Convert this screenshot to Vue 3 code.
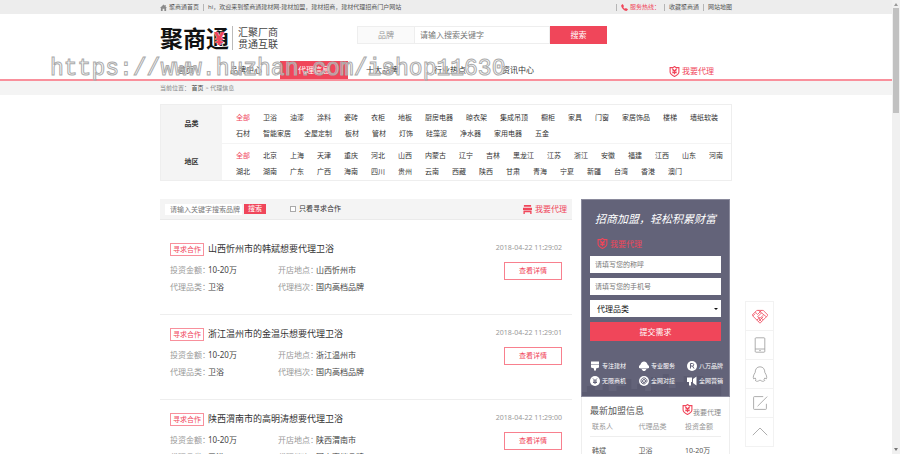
<template>
  <div class="page">
    <div class="content">
      <div class="topbar">
        <div class="wrap topbar-inner">
          <a href="#" class="home-link">
            <svg class="home-icon" viewBox="0 0 16 16"><path fill="#8a8a8a" d="M8 1 0 9h2v7h4v-5h4v5h4V9h2L13 6V2h-2v2z" /></svg>
            聚商通首页
          </a>
          <i class="sep"></i>
          <span>hi，欢迎来到聚商通建材网-建材加盟，建材招商，建材代理招商门户网站</span>
          <div class="topbar-right">
            <i class="sep"></i>
            <span class="hotline">
              <svg class="phone-icon" viewBox="0 0 16 16"><path fill="#f0465a" d="M1 2 4 0l3 5-2 2c1 2 2 3 4 4l2-2 5 3-2 3c-2 2-6 0-9-3S-1 5 1 2z" /></svg>
              服务热线：
            </span>
            <i class="sep"></i>
            <a href="#">收藏聚商通</a>
            <i class="sep"></i>
            <a href="#">网站地图</a>
          </div>
        </div>
      </div>

      <header class="header">
        <div class="wrap brand-row">
          <a href="#" class="logo">聚商<span class="logo-tong">通<b>¥</b></span></a>
          <div class="slogan">汇聚厂商<br />贯通互联</div>
          <form class="search" @submit.prevent>
            <span class="search-type">品牌</span>
            <input v-model="keyword" type="text" aria-label="搜索关键字" placeholder="请输入搜索关键字" />
            <button type="submit">搜索</button>
          </form>
        </div>
        <div class="wrap nav-row">
          <nav class="nav">
            <a v-for="item in navItems" :key="item" href="#" :class="{ active: item === '代理信息' }">{{ item }}</a>
          </nav>
          <a href="#" class="agent-link nav-agent">
            <svg class="shield" viewBox="0 0 20 20"><path d="M10 1 13 3h5v8c0 4-4 6-8 8-4-2-8-4-8-8V3h5z M6 5l4 4 4-4 M10 9v6 M6 9h8 M6 12h8" /></svg>
            我要代理
          </a>
        </div>
      </header>

      <div class="crumbs">
        <div class="wrap">当前位置： <a href="#">首页</a> &gt; 代理信息</div>
      </div>

      <div class="wrap filter">
        <div v-for="group in filters" :key="group.name" class="filter-row">
          <div class="filter-name">{{ group.name }}</div>
          <div class="filter-body">
            <div v-for="(line, n) in group.lines" :key="n" class="filter-line">
              <a v-for="opt in line" :key="opt" href="#" :class="{ on: opt === '全部' }">{{ opt }}</a>
            </div>
          </div>
        </div>
      </div>

      <div class="wrap main">
        <section class="list">
          <div class="toolbar">
            <input v-model="brand" type="text" class="brand-input" aria-label="搜索品牌" placeholder="请输入关键字搜索品牌" />
            <button class="brand-btn">搜索</button>
            <label class="only"><input v-model="onlyCoop" type="checkbox" />只看寻求合作</label>
            <a href="#" class="agent-link toolbar-agent">
              <svg class="shop" viewBox="0 0 22 20"><path fill="#f0465a" d="M3 0h16v4H3zM1 6h20v5H1zM2 12h18v8h-3v-4H5v4H2z" /></svg>
              我要代理
            </a>
          </div>
          <article v-for="item in items" :key="item.time" class="item">
            <div class="item-info">
              <h3><span class="tag">寻求合作</span>{{ item.title }}</h3>
              <dl>
                <div><dt>投资金额：</dt><dd>10-20万</dd></div>
                <div><dt>开店地点：</dt><dd>{{ item.place }}</dd></div>
                <div><dt>代理品类：</dt><dd>卫浴</dd></div>
                <div><dt>代理档次：</dt><dd>国内高档品牌</dd></div>
              </dl>
            </div>
            <div class="item-side">
              <time>{{ item.time }}</time>
              <button>查看详情</button>
            </div>
          </article>
        </section>

        <aside class="side">
          <form class="join" @submit.prevent>
            <h2>招商加盟，轻松积累财富</h2>
            <a href="#" class="agent-link join-agent">
              <svg class="shield" viewBox="0 0 20 20"><path d="M10 1 13 3h5v8c0 4-4 6-8 8-4-2-8-4-8-8V3h5z M6 5l4 4 4-4 M10 9v6 M6 9h8 M6 12h8" /></svg>
              我要代理
            </a>
            <input v-model="name" type="text" aria-label="称呼" placeholder="请填写您的称呼" />
            <input v-model="phone" type="text" aria-label="手机号" placeholder="请填写您的手机号" />
            <div class="select-box">
              <select v-model="category" aria-label="代理品类">
                <option>代理品类</option>
              </select>
            </div>
            <button type="submit">提交需求</button>
            <ul>
              <li v-for="f in features" :key="f.text">
                <svg viewBox="0 0 20 20">
                  <path v-if="f.icon === 'brush'" fill="#fff" d="M2 1h16v5H2zM2 7h16v6l-6 2v4H8v-4l-6-2z" />
                  <g v-else-if="f.icon === 'helmet'"><path fill="#fff" d="M3 7c2-8 12-8 14 0l3 3v4l-4 1H4l-4-1v-4z" /><path fill="#fff" d="M5 16h10l-3 4H8z" /></g>
                  <path v-else-if="f.icon === 'horn'" fill="#fff" d="M0 3h10v9H8v7H4v-7H0zM12 6l7-5v18l-7-5z" />
                  <g v-else><circle cx="10" cy="10" r="10" fill="#fff" /><path class="mark" :d="f.icon" /></g>
                </svg>
                {{ f.text }}
              </li>
            </ul>
            <svg class="skyline" viewBox="0 0 149 24" preserveAspectRatio="none"><path fill="#5b5b71" d="M0 24v-4h5v-6h8v4h8v-8h6v9h8v-5h9v-7h6v10h6v-5h8v7h6V5h5v8h7V2h6v14h7v-6h8v-6h6v12h6V4h8v9h6V7h6v6h6v11z" /></svg>
          </form>

          <div class="latest">
            <div class="latest-head">
              <h2>最新加盟信息</h2>
              <a href="#">
                <svg class="shield" viewBox="0 0 20 20"><path d="M10 1 13 3h5v8c0 4-4 6-8 8-4-2-8-4-8-8V3h5z M6 5l4 4 4-4 M10 9v6 M6 9h8 M6 12h8" /></svg>我要代理
              </a>
            </div>
            <table>
              <thead>
                <tr><th>联系人</th><th>代理品类</th><th>投资金额</th></tr>
              </thead>
              <tbody>
                <tr><td>韩斌</td><td>卫浴</td><td>10-20万</td></tr>
              </tbody>
            </table>
          </div>
        </aside>
      </div>
    </div>

    <div class="float-bar">
      <a v-for="icon in floatIcons" :key="icon.label" href="#" :aria-label="icon.label" :class="{ red: icon.label === '合作' }">
        <svg viewBox="0 0 20 20"><path :d="icon.d" /></svg>
      </a>
    </div>

    <div class="scrollbar">
      <i class="arrow up"></i>
      <div class="thumb"></div>
      <i class="arrow down"></i>
    </div>

    <div class="watermark">https://www.huzhan.com/ishop11630</div>
  </div>
</template>

<script setup>
import { ref } from 'vue'

const keyword = ref('')
const brand = ref('')
const onlyCoop = ref(false)
const name = ref('')
const phone = ref('')
const category = ref('代理品类')

const navItems = ['首页', '品牌中心', '代理信息', '十大品牌', '行业热点', '资讯中心']

const filters = [
  {
    name: '品类',
    lines: [
      ['全部', '卫浴', '油漆', '涂料', '瓷砖', '衣柜', '地板', '厨房电器', '晾衣架', '集成吊顶', '橱柜', '家具', '门窗', '家居饰品', '楼梯', '墙纸软装'],
      ['石材', '智能家居', '全屋定制', '板材', '管材', '灯饰', '硅藻泥', '净水器', '家用电器', '五金']
    ]
  },
  {
    name: '地区',
    lines: [
      ['全部', '北京', '上海', '天津', '重庆', '河北', '山西', '内蒙古', '辽宁', '吉林', '黑龙江', '江苏', '浙江', '安徽', '福建', '江西', '山东', '河南'],
      ['湖北', '湖南', '广东', '广西', '海南', '四川', '贵州', '云南', '西藏', '陕西', '甘肃', '青海', '宁夏', '新疆', '台湾', '香港', '澳门']
    ]
  }
]

const items = [
  { title: '山西忻州市的韩斌想要代理卫浴', place: '山西忻州市', time: '2018-04-22 11:29:02' },
  { title: '浙江温州市的金温乐想要代理卫浴', place: '浙江温州市', time: '2018-04-22 11:29:01' },
  { title: '陕西渭南市的高明涛想要代理卫浴', place: '陕西渭南市', time: '2018-04-22 11:29:00' }
]

// icon: 名称或圆形图标内的线条
const features = [
  { text: '专注建材', icon: 'brush' },
  { text: '专业服务', icon: 'helmet' },
  { text: '八万品牌', icon: 'M7 15V5h4a2 2 0 0 1 0 5H7m4 0 3 5' },
  { text: '无限商机', icon: 'M6 5l4 4 4-4M10 9v7M6 10h8M6 13h8' },
  { text: '全网对接', icon: 'M13 10a3 3 0 1 1-6 0 3 3 0 0 1 6 0v1c0 3 3 2 3-1a6 6 0 1 0-3 5' },
  { text: '全网营销', icon: 'horn' }
]

const floatIcons = [
  { label: '合作', d: 'M10 19 0 9l6-6h8l6 6zM4 5l3 3 5-5M1 10l3-3M8 3l10 8M12 6l-5 5 3 2 4-4M6 15l4-3M8 17l6-6M12 17l-3-3M14 15l-3-3' },
  { label: '手机', d: 'M5 1h10q1 0 1 1v16q0 1-1 1H5q-1 0-1-1V2q0-1 1-1zM4 15h12M9 17h2' },
  { label: 'QQ', d: 'M10 1C6 1 4 4 4 8c-2 3-3 6-2 8l2-1 1 2-1 1c2 2 4 1 5 0h2c1 1 3 2 5 0l-1-1 1-2 2 1c1-2 0-5-2-8 0-4-2-7-6-7z' },
  { label: '留言', d: 'M14 2H3q-1 0-1 1v14q0 1 1 1h14q1 0 1-1v-6M7 14 19 2' },
  { label: '返回顶部', d: 'M1 14l9-9 9 9' }
]
</script>

<style>
html,
body {
  overflow: hidden;
}
</style>

<style scoped>
.page {
  position: relative;
  display: flex;
  height: 100vh;
  overflow: hidden;
  background: #fff;
  color: #555;
  font-family: "Noto Sans", "Noto Sans CJK SC", sans-serif;
  font-size: 7px;
  line-height: 10px;
}
.page * {
  box-sizing: border-box;
}
.content {
  flex: 1;
  min-width: 0;
}
.wrap {
  width: 100%;
  max-width: 572px;
  margin: 0 auto;
}
a {
  color: inherit;
  text-decoration: none;
}
h2,
h3,
dl,
dd,
ul {
  margin: 0;
  padding: 0;
  font-weight: normal;
}
button,
input,
select {
  margin: 0;
  padding: 0;
  border: 0;
  border-radius: 0;
  font: inherit;
  outline: none;
}
button {
  background: #f0465a;
  color: #fff;
  cursor: pointer;
}
input::placeholder {
  color: #777;
  opacity: 1;
}

.topbar {
  background: #ededed;
  font-size: 6px;
}
.topbar-inner {
  display: flex;
  align-items: center;
  height: 14px;
  white-space: nowrap;
}
.home-link {
  display: flex;
  align-items: center;
  gap: 2px;
}
.home-icon,
.phone-icon {
  width: 7px;
  height: 7px;
}
.sep {
  width: 1px;
  height: 7px;
  margin: 0 4px;
  background: #b5b5b5;
}
.topbar-right {
  display: flex;
  align-items: center;
  margin-left: auto;
}
.hotline {
  display: flex;
  align-items: center;
  gap: 2px;
  color: #f0465a;
}

.header {
  border-bottom: 2px solid #f9909c;
}
.brand-row {
  display: flex;
  align-items: center;
  height: 47px;
}
.logo {
  color: #111;
  font-size: 23px;
  font-weight: bold;
  line-height: 24px;
}
.logo-tong {
  position: relative;
}
.logo-tong b {
  position: absolute;
  left: 8px;
  top: 6px;
  color: #f0465a;
  font-size: 18px;
  line-height: 20px;
  text-shadow: 0 0 1px #fff, 0 0 1px #fff;
}
.slogan {
  margin-left: 3px;
  padding-left: 5px;
  border-left: 1px solid #bbb;
  color: #444;
  font-size: 10px;
  line-height: 12px;
}
.search {
  display: flex;
  height: 18px;
  margin: 0 auto 5px 79px;
  font-size: 8px;
}
.search-type {
  width: 58px;
  border: 1px solid #eee;
  background: #fafafa;
  color: #999;
  line-height: 16px;
  text-align: center;
}
.search input {
  width: 135px;
  padding-left: 5px;
  border: 1px solid #eee;
  border-left: 0;
}
.search button {
  width: 57px;
}
.nav-row {
  display: flex;
  align-items: center;
  height: 18px;
}
.nav {
  display: flex;
  color: #333;
  font-size: 8px;
  line-height: 18px;
  text-align: center;
}
.nav a {
  width: 68px;
}
.nav a:first-child {
  width: 52px;
}
.nav a.active {
  background: #f0465a;
  color: #fff;
}
.agent-link {
  display: flex;
  align-items: center;
  gap: 2px;
  color: #f0465a;
  font-size: 8px;
}
.nav-agent {
  margin: 2px 18px 0 auto;
}
.shield {
  width: 11px;
  height: 11px;
  fill: none;
  stroke: #f0465a;
  stroke-width: 2;
}

.crumbs {
  background: #f4f4f4;
  color: #888;
  font-size: 6px;
  line-height: 14px;
}
.crumbs a {
  color: #444;
}

.filter {
  margin-top: 9px;
  border: 1px solid #eee;
}
.filter-row {
  display: flex;
  height: 38px;
  color: #333;
}
.filter-row + .filter-row {
  height: 37px;
}
.filter-row + .filter-row .filter-body {
  padding-top: 4px;
  border-top: 1px solid #f4f4f4;
}
.filter-name {
  display: flex;
  align-items: center;
  justify-content: center;
  width: 61px;
  background: #f4f4f4;
  font-weight: bold;
}
.filter-body {
  flex: 1;
  padding: 5px 0 0 14px;
}
.filter-line {
  display: flex;
  gap: 13px;
  line-height: 16px;
  white-space: nowrap;
}
.filter .on {
  color: #f0465a;
}

.main {
  display: flex;
  align-items: flex-start;
  gap: 9px;
  margin-top: 18px;
  padding-right: 2px;
}
.list {
  flex: 1;
}
.toolbar {
  display: flex;
  align-items: center;
  height: 21px;
  padding: 0 5px;
  border-bottom: 1px solid #eaeaea;
  background: #f4f4f4;
}
.brand-input {
  width: 77px;
  height: 11px;
  padding-left: 5px;
  background: #fff;
}
.brand-btn {
  width: 22px;
  height: 10px;
  margin-left: 2px;
}
.only {
  display: flex;
  align-items: center;
  gap: 3px;
  margin-left: 24px;
  color: #333;
}
.only input {
  width: 6px;
  height: 6px;
  border: 1px solid #aaa;
  background: #fff;
  appearance: none;
}
.only input:checked {
  background: #f0465a;
}
.toolbar-agent {
  margin-left: auto;
}
.shop {
  width: 11px;
  height: 9px;
}
.item {
  display: flex;
  justify-content: space-between;
  height: 85px;
  padding: 12px 10px 0;
}
.item + .item {
  border-top: 1px solid #eee;
}
.item:nth-child(2) {
  height: 94px;
  padding-top: 22px;
}
.item h3 {
  display: flex;
  align-items: center;
  gap: 4px;
  color: #333;
  font-size: 9px;
  line-height: 14px;
}
.tag {
  width: 34px;
  height: 13px;
  border: 1px solid #f8909c;
  color: #f0465a;
  font-size: 7px;
  line-height: 11px;
  text-align: center;
}
.item dl {
  display: grid;
  grid-template-columns: 108px 108px;
  margin-top: 5px;
  font-size: 8px;
  line-height: 17px;
  white-space: nowrap;
}
.item dl div {
  display: flex;
}
.item dt {
  width: 38px;
  color: #999;
}
.item dd {
  color: #444;
}
.item-side {
  display: flex;
  flex-direction: column;
  align-items: flex-end;
  gap: 8px;
  color: #999;
}
.item-side time {
  line-height: 12px;
}
.item-side button {
  width: 58px;
  height: 18px;
  border: 1px solid #f8808e;
  background: #fff;
  color: #f0465a;
}

.side {
  width: 149px;
}
.join {
  position: relative;
  display: flex;
  flex-direction: column;
  gap: 5px;
  height: 198px;
  padding: 11px 8px 0;
  border: 1px solid #8a8a9c;
  background: #636379;
}
.join h2 {
  color: #fff;
  font-size: 11px;
  font-style: italic;
  line-height: 16px;
  text-align: center;
  white-space: nowrap;
}
.join-agent {
  margin: 6px 0 2px 7px;
}
.join > input {
  height: 17px;
  padding-left: 5px;
  background: #fff;
}
.select-box {
  position: relative;
}
.select-box::after {
  content: "";
  position: absolute;
  right: 3px;
  top: 8px;
  border: 2px solid transparent;
  border-top-color: #111;
}
.join select {
  display: block;
  width: 100%;
  height: 17px;
  padding-left: 7px;
  background: #fff;
  color: #111;
  font-size: 8px;
  appearance: none;
}
.join > button {
  height: 19px;
  font-size: 8px;
}
.join ul {
  position: relative;
  z-index: 1;
  display: grid;
  grid-template-columns: 49px 48px 36px;
  margin-top: 12px;
  list-style: none;
}
.join li {
  display: flex;
  align-items: center;
  gap: 2px;
  height: 15px;
  color: #fff;
  font-size: 6px;
  white-space: nowrap;
}
.join li svg {
  width: 10px;
  height: 10px;
}
.mark {
  fill: none;
  stroke: #636379;
  stroke-width: 2;
}
.skyline {
  position: absolute;
  left: 0;
  bottom: 0;
  width: 100%;
  height: 24px;
}
.latest {
  padding: 6px 8px 0;
  border: 1px solid #eee;
  border-top: 0;
}
.latest-head {
  display: flex;
  align-items: center;
  justify-content: space-between;
}
.latest h2 {
  color: #555;
  font-size: 9px;
  line-height: 16px;
}
.latest-head a {
  display: flex;
  align-items: flex-end;
  color: #888;
}
.latest-head .shield {
  margin-bottom: 3px;
}
.latest table {
  width: 100%;
  border-collapse: collapse;
  table-layout: fixed;
}
.latest th,
.latest td {
  height: 17px;
  padding: 0 0 0 2px;
  font-weight: normal;
  text-align: left;
}
.latest th {
  border-bottom: 1px solid #eee;
  color: #999;
}
.latest th:last-child {
  width: 38px;
}
.latest td {
  height: 29px;
}

.float-bar {
  position: absolute;
  left: calc(50% + 295px);
  top: 301px;
  width: 29px;
  border: 1px solid #f2f2f2;
  background: #fff;
}
.float-bar a {
  display: flex;
  align-items: center;
  justify-content: center;
  height: 28px;
}
.float-bar a + a {
  height: 29px;
  border-top: 1px solid #f2f2f2;
}
.float-bar svg {
  width: 16px;
  height: 16px;
  fill: none;
  stroke: #999;
  stroke-width: 1;
}
.float-bar .red svg {
  stroke: #f0465a;
}

.scrollbar {
  display: flex;
  flex-direction: column;
  align-items: center;
  width: 8px;
  padding: 3px 0;
  background: #f0f0f0;
}
.thumb {
  width: 6px;
  height: 105px;
  margin: 2px 0 auto;
  background: #c1c1c1;
}
.arrow {
  border: 2px solid transparent;
}
.arrow.up {
  border-top: 0;
  border-bottom: 3px solid #999;
}
.arrow.down {
  border-bottom: 0;
  border-top: 3px solid #777;
}

.watermark {
  position: absolute;
  left: 50px;
  top: 54px;
  color: rgba(255, 255, 255, 0.4);
  font-family: "Liberation Mono", monospace;
  font-size: 23px;
  line-height: 30px;
  white-space: nowrap;
  pointer-events: none;
  -webkit-text-stroke: 1px #aaa;
}
</style>
